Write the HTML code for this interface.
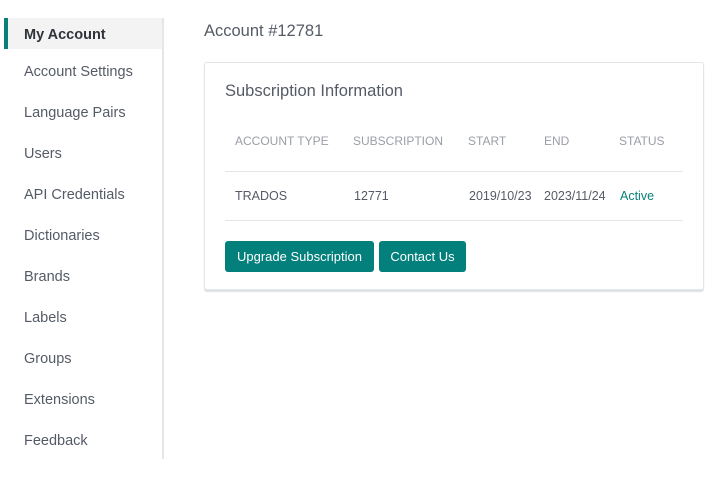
<!DOCTYPE html>
<html><head><style>
*{margin:0;padding:0;box-sizing:border-box}
body{width:720px;height:500px;background:#fff;font-family:"Liberation Sans",sans-serif;position:relative;overflow:hidden;color:#4a4f5a}
.side{position:absolute;left:4px;top:18px;width:160px;height:441px;border-right:2px solid #e4e7ea}
.act{position:absolute;left:0;top:0;width:158px;height:31px;background:#f3f3f3;border-left:4px solid #0a7f7a}
.it{position:absolute;left:20px;font-size:14.5px;color:#555b66;line-height:20px}
.card{position:absolute;left:204px;top:62px;width:500px;height:228px;border:1px solid #e2e6ea;border-radius:3px;box-shadow:0 2px 1px #dde1e5}
.t{position:absolute;white-space:nowrap}
.h{font-size:12px;color:#9a9ea6;top:134px}
.d{font-size:12.5px;color:#555b66;top:189px}
.line{position:absolute;left:225px;width:458px;height:1px;background:#e2e6ea}
.btn{position:absolute;top:241px;height:31px;background:#037f7c;color:#fff;border-radius:3px;font-size:13px;line-height:32px;text-align:center}
</style></head><body>
<div class="side">
<div class="act"></div>
<div class="it" style="top:7px;font-weight:bold;color:#2f333a">My Account</div>
<div class="it" style="top:44px">Account Settings</div>
<div class="it" style="top:85px">Language Pairs</div>
<div class="it" style="top:126px">Users</div>
<div class="it" style="top:167px">API Credentials</div>
<div class="it" style="top:208px">Dictionaries</div>
<div class="it" style="top:249px">Brands</div>
<div class="it" style="top:290px">Labels</div>
<div class="it" style="top:331px">Groups</div>
<div class="it" style="top:372px">Extensions</div>
<div class="it" style="top:413px">Feedback</div>
</div>
<div class="t" style="left:204px;top:22px;font-size:16.5px;color:#555b66">Account #12781</div>
<div class="card"></div>
<div class="t" style="left:225px;top:82px;font-size:16.5px;color:#555b66">Subscription Information</div>
<div class="t h" style="left:235px">ACCOUNT TYPE</div>
<div class="t h" style="left:353px">SUBSCRIPTION</div>
<div class="t h" style="left:468px">START</div>
<div class="t h" style="left:544px">END</div>
<div class="t h" style="left:619px">STATUS</div>
<div class="line" style="top:171px"></div>
<div class="t d" style="left:235px">TRADOS</div>
<div class="t d" style="left:354px">12771</div>
<div class="t d" style="left:469px">2019/10/23</div>
<div class="t d" style="left:544px">2023/11/24</div>
<div class="t d" style="left:620px;color:#0a7f7a">Active</div>
<div class="line" style="top:220px"></div>
<div class="btn" style="left:225px;width:149px">Upgrade Subscription</div>
<div class="btn" style="left:379px;width:87px">Contact Us</div>
</body></html>
